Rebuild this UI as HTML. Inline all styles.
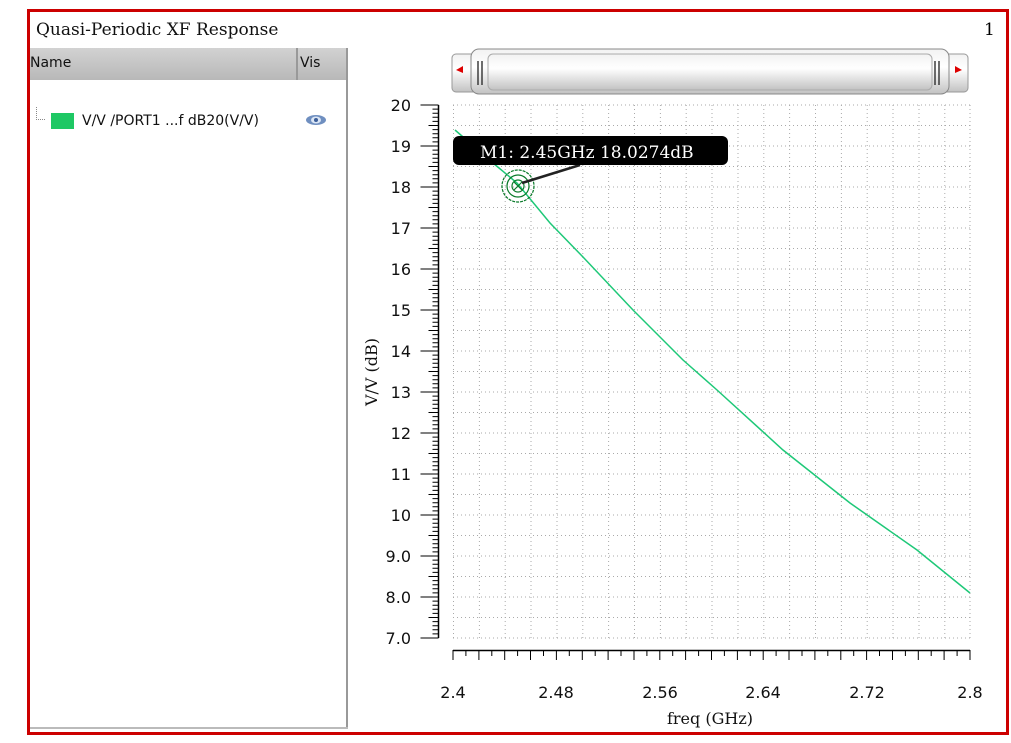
<!DOCTYPE html>
<html><head><meta charset="utf-8"><style>
html,body{margin:0;padding:0;background:#fff;width:1011px;height:743px;overflow:hidden;font-family:"DejaVu Sans","Liberation Sans",sans-serif}
.frame{position:absolute;left:27px;top:9px;width:976px;height:720px;border:3px solid #cc0000;background:#fff}
.title{position:absolute;left:36px;top:20px;font-family:"DejaVu Serif","Liberation Serif",serif;font-size:17px;color:#111}
.one{position:absolute;left:984px;top:20px;font-family:"DejaVu Serif","Liberation Serif",serif;font-size:17px}
.hdr{position:absolute;left:30px;top:48px;width:318px;height:32px;background:linear-gradient(#d2d2d2,#b8b8b8);font-size:14px;color:#111}
.panel{position:absolute;left:346px;top:48px;width:2px;height:681px;background:#999}
.bot{position:absolute;left:30px;top:727px;width:318px;height:2px;background:#bbb}
</style></head><body>
<div class="frame"></div>
<div class="title">Quasi-Periodic XF Response</div>
<div class="one">1</div>
<div class="hdr"><span style="position:absolute;left:0;top:7px">Name</span><span style="position:absolute;left:266px;top:0;width:2px;height:32px;background:#999"></span><span style="position:absolute;left:270px;top:7px">Vis</span></div>
<div class="panel"></div><div class="bot"></div>
<div style="position:absolute;left:36px;top:107px;width:8px;height:12px;border-left:1px dotted #888;border-bottom:1px dotted #888"></div>
<div style="position:absolute;left:51px;top:113px;width:23px;height:16px;background:#1ec864"></div>
<div style="position:absolute;left:82px;top:113px;font-size:14px;color:#111">V/V /PORT1 ...f dB20(V/V)</div>
<svg style="position:absolute;left:305px;top:113px" width="22" height="14"><ellipse cx="11" cy="7" rx="10" ry="5" fill="#6f8fc0"/><ellipse cx="11" cy="7" rx="5" ry="3.5" fill="#dbe6f5"/><circle cx="11" cy="7" r="2" fill="#3d5f9a"/></svg>

<svg style="position:absolute;left:0;top:0" width="1011" height="743" font-family="DejaVu Sans, Liberation Sans, sans-serif">
<defs>
<linearGradient id="sb" x1="0" y1="0" x2="0" y2="1"><stop offset="0" stop-color="#f2f2f2"/><stop offset=".4" stop-color="#ffffff"/><stop offset="1" stop-color="#c2c2c2"/></linearGradient>
</defs>
<rect x="452" y="54" width="516" height="38" rx="4" fill="url(#sb)" stroke="#999"/>
<rect x="471" y="49" width="478" height="45" rx="8" fill="url(#sb)" stroke="#888"/>
<rect x="488" y="54" width="444" height="36" rx="5" fill="url(#sb)" stroke="#aaa"/>
<path d="M456 70 L463 66 L463 73 Z" fill="#d00"/><path d="M955 66 L962 70 L955 73 Z" fill="#d00"/>
<path d="M478 61V85M482 61V85M935 61V85M939 61V85" stroke="#222" stroke-width="1.3"/>
<g stroke="#aaa" stroke-width="1" stroke-dasharray="1,3">
<path d="M453 105H970M453 125.5H970M453 146H970M453 166.5H970M453 187H970M453 207.5H970M453 228H970M453 248.5H970M453 269H970M453 289.5H970M453 310H970M453 330.5H970M453 351H970M453 371.5H970M453 392H970M453 412.5H970M453 433H970M453 453.5H970M453 474H970M453 494.5H970M453 515H970M453 535.5H970M453 556H970M453 576.5H970M453 597H970M453 617.5H970M453 638H970"/>
<path d="M453.5 105V638M479.4 105V638M505.2 105V638M531 105V638M557 105V638M582.8 105V638M608.6 105V638M634.5 105V638M660.4 105V638M686.2 105V638M712 105V638M738 105V638M763.8 105V638M789.6 105V638M815.5 105V638M841.4 105V638M867.2 105V638M893 105V638M919 105V638M944.8 105V638M970 105V638"/>
</g>
<path d="M438.5 105V638" stroke="#000" stroke-width="1.5"/>
<g stroke="#000" stroke-width="1" id="yt"></g>
<path d="M453 650.5H970" stroke="#000" stroke-width="1.5"/>
<g stroke="#000" id="xt"></g>
<g font-size="16" fill="#111" text-anchor="end">
<text x="411" y="111">20</text><text x="411" y="152">19</text><text x="411" y="193">18</text><text x="411" y="234">17</text><text x="411" y="275">16</text><text x="411" y="316">15</text><text x="411" y="357">14</text><text x="411" y="398">13</text><text x="411" y="439">12</text><text x="411" y="480">11</text><text x="411" y="521">10</text><text x="411" y="562">9.0</text><text x="411" y="603">8.0</text><text x="411" y="644">7.0</text>
</g>
<g font-size="16" fill="#111" text-anchor="middle">
<text x="453" y="698">2.4</text><text x="556" y="698">2.48</text><text x="660" y="698">2.56</text><text x="763" y="698">2.64</text><text x="867" y="698">2.72</text><text x="970" y="698">2.8</text>
</g>
<text x="710" y="724" font-family="DejaVu Serif, Liberation Serif, serif" font-size="16" text-anchor="middle" fill="#111">freq (GHz)</text>
<text transform="translate(377,372) rotate(-90)" font-family="DejaVu Serif, Liberation Serif, serif" font-size="16" text-anchor="middle" fill="#111">V/V (dB)</text>
<path d="M455 130 L493 163 L517 183 L550 223 L583 257 L633 310 L683 360 L717 390 L783 450 L850 503 L917 550 L970 593" fill="none" stroke="#1ec878" stroke-width="1.5"/>
<g fill="none" stroke="#0a7a2a" stroke-width="1.2">
<circle cx="518" cy="186" r="16" stroke-dasharray="3,1"/><circle cx="518" cy="186" r="11"/><circle cx="518" cy="186" r="6"/>
<path d="M514 182L522 190M522 182L514 190"/>
</g>
<path d="M522 183 L580 165" stroke="#222" stroke-width="2.5"/>
<rect x="453" y="136" width="275" height="29" rx="6" fill="#000"/>
<text x="480" y="158" font-family="DejaVu Serif, Liberation Serif, serif" font-size="17" fill="#fff">M1: 2.45GHz 18.0274dB</text>
</svg>
<script>
var yt=document.getElementById('yt'),s='';
for(var i=0;i<=130;i++){var y=105+i*4.1;var l=(i%10==0)?18:(i%5==0?10:6);s+='M'+(438.5-l)+' '+y.toFixed(1)+'H438.5';}
var p=document.createElementNS('http://www.w3.org/2000/svg','path');p.setAttribute('d',s);yt.appendChild(p);
var xt=document.getElementById('xt');s='';
for(var j=0;j<=40;j++){var x=453+j*517/40;var l=(j%2==0)?10:6;s+='M'+x.toFixed(1)+' 650V'+(650+l);}
var q=document.createElementNS('http://www.w3.org/2000/svg','path');q.setAttribute('d',s);xt.appendChild(q);
</script>
</body></html>
